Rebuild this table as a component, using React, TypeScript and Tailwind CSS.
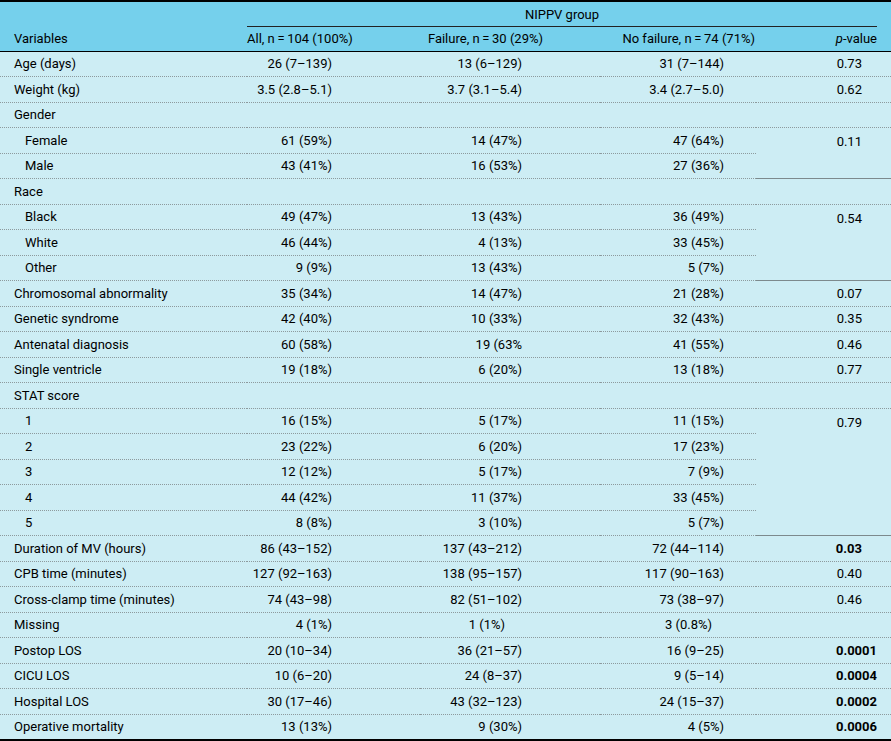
import React from 'react';

interface Row {
  label: string;
  indent?: boolean;
  group?: boolean;
  all?: string;
  fail?: string;
  nofail?: string;
  p?: string;
  bold?: boolean;
  span?: number;
  skipP?: boolean;
  failPr?: string;
  nofailPr?: string;
}

const ROWS: Row[] = [
  { label: 'Age (days)', all: '26 (7–139)', fail: '13 (6–129)', nofail: '31 (7–144)', p: '0.73' },
  { label: 'Weight (kg)', all: '3.5 (2.8–5.1)', fail: '3.7 (3.1–5.4)', nofail: '3.4 (2.7–5.0)', p: '0.62' },
  { label: 'Gender', group: true },
  { label: 'Female', indent: true, all: '61 (59%)', fail: '14 (47%)', nofail: '47 (64%)', p: '0.11', span: 2 },
  { label: 'Male', indent: true, all: '43 (41%)', fail: '16 (53%)', nofail: '27 (36%)', skipP: true },
  { label: 'Race', group: true },
  { label: 'Black', indent: true, all: '49 (47%)', fail: '13 (43%)', nofail: '36 (49%)', p: '0.54', span: 3 },
  { label: 'White', indent: true, all: '46 (44%)', fail: '4 (13%)', nofail: '33 (45%)', skipP: true },
  { label: 'Other', indent: true, all: '9 (9%)', fail: '13 (43%)', nofail: '5 (7%)', skipP: true },
  { label: 'Chromosomal abnormality', all: '35 (34%)', fail: '14 (47%)', nofail: '21 (28%)', p: '0.07' },
  { label: 'Genetic syndrome', all: '42 (40%)', fail: '10 (33%)', nofail: '32 (43%)', p: '0.35' },
  { label: 'Antenatal diagnosis', all: '60 (58%)', fail: '19 (63%', nofail: '41 (55%)', p: '0.46' },
  { label: 'Single ventricle', all: '19 (18%)', fail: '6 (20%)', nofail: '13 (18%)', p: '0.77' },
  { label: 'STAT score', group: true },
  { label: '1', indent: true, all: '16 (15%)', fail: '5 (17%)', nofail: '11 (15%)', p: '0.79', span: 5 },
  { label: '2', indent: true, all: '23 (22%)', fail: '6 (20%)', nofail: '17 (23%)', skipP: true },
  { label: '3', indent: true, all: '12 (12%)', fail: '5 (17%)', nofail: '7 (9%)', skipP: true },
  { label: '4', indent: true, all: '44 (42%)', fail: '11 (37%)', nofail: '33 (45%)', skipP: true },
  { label: '5', indent: true, all: '8 (8%)', fail: '3 (10%)', nofail: '5 (7%)', skipP: true },
  { label: 'Duration of MV (hours)', all: '86 (43–152)', fail: '137 (43–212)', nofail: '72 (44–114)', p: '0.03', bold: true },
  { label: 'CPB time (minutes)', all: '127 (92–163)', fail: '138 (95–157)', nofail: '117 (90–163)', p: '0.40' },
  { label: 'Cross-clamp time (minutes)', all: '74 (43–98)', fail: '82 (51–102)', nofail: '73 (38–97)', p: '0.46' },
  { label: 'Missing', all: '4 (1%)', fail: '1 (1%)', nofail: '3 (0.8%)', failPr: 'pr-[95px]', nofailPr: 'pr-[44px]' },
  { label: 'Postop LOS', all: '20 (10–34)', fail: '36 (21–57)', nofail: '16 (9–25)', p: '0.0001', bold: true },
  { label: 'CICU LOS', all: '10 (6–20)', fail: '24 (8–37)', nofail: '9 (5–14)', p: '0.0004', bold: true },
  { label: 'Hospital LOS', all: '30 (17–46)', fail: '43 (32–123)', nofail: '24 (15–37)', p: '0.0002', bold: true },
  { label: 'Operative mortality', all: '13 (13%)', fail: '9 (30%)', nofail: '4 (5%)', p: '0.0006', bold: true },
];

const n = '\u2009=\u2009';

export default function App() {
  const last = ROWS.length - 1;
  return (
    <div className="w-[891px] h-[741px] bg-[#cdedf4] text-black text-[13px] leading-none font-['Roboto','Liberation_Sans',sans-serif]">
      <table className="w-[891px] table-fixed border-collapse border-t-[2px] border-b-[2px] border-black">
        <colgroup>
          <col className="w-[247px]" />
          <col className="w-[173px]" />
          <col className="w-[180px]" />
          <col className="w-[156px]" />
          <col className="w-[135px]" />
        </colgroup>
        <thead className="bg-[#75d0ec]">
          <tr className="h-[25px]">
            <th rowSpan={2} className="align-bottom text-left font-normal pl-[14px] pb-[6px] border-b border-black">
              Variables
            </th>
            <th colSpan={4} className="p-0 font-normal align-bottom">
              <div className="mr-[14px] border-b border-[#222] h-[25px] flex items-center justify-center">
                NIPPV group
              </div>
            </th>
          </tr>
          <tr className="h-[24px]">
            <th className="p-0 font-normal border-b border-black">
              <div className="flex justify-start whitespace-nowrap">All, n{n}104 (100%)</div>
            </th>
            <th className="p-0 font-normal border-b border-black">
              <div className="flex justify-end pr-[57px] whitespace-nowrap">Failure, n{n}30 (29%)</div>
            </th>
            <th className="p-0 font-normal border-b border-black">
              <div className="flex justify-end pr-[1px] whitespace-nowrap">No failure, n{n}74 (71%)</div>
            </th>
            <th className="p-0 font-normal border-b border-black">
              <div className="flex justify-end pr-[14px] whitespace-nowrap">
                <span className="italic">p</span>-value
              </div>
            </th>
          </tr>
        </thead>
        <tbody>
          {ROWS.map((r, i) => {
            const line = i === last ? '' : 'border-b border-dotted border-[#8d9a9d]';
            const pPad = r.bold && r.p && r.p.length > 4 ? 'pr-[14px]' : 'pr-[29px]';
            const pCls = r.span
              ? `align-top pt-[7px] border-b border-solid border-[#7d8a8d]`
              : `align-middle ${line}`;
            return (
              <tr key={i} className="h-[25.5px]">
                <td className={`${r.indent ? 'pl-[25px]' : 'pl-[14px]'} whitespace-nowrap ${line}`}>{r.label}</td>
                <td className={`text-right pr-[88px] whitespace-nowrap ${line}`}>{r.all}</td>
                <td className={`text-right ${r.failPr ?? 'pr-[78px]'} whitespace-nowrap ${line}`}>{r.fail}</td>
                <td className={`text-right ${r.nofailPr ?? 'pr-[32px]'} whitespace-nowrap ${line}`}>{r.nofail}</td>
                {!r.skipP && (
                  <td
                    rowSpan={r.span ?? 1}
                    className={`text-right whitespace-nowrap ${pPad} ${r.bold ? 'font-bold' : ''} ${pCls}`}
                  >
                    {r.p}
                  </td>
                )}
              </tr>
            );
          })}
        </tbody>
      </table>
    </div>
  );
}
